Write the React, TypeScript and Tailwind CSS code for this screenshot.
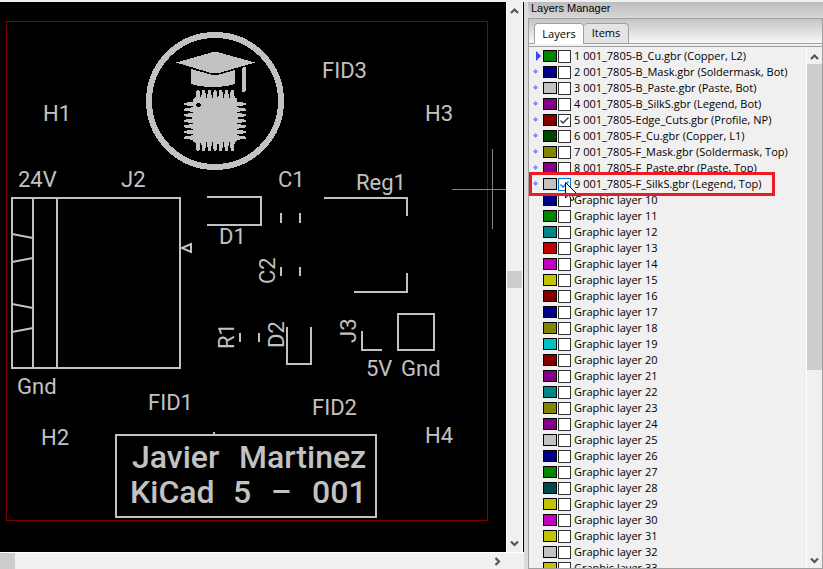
import React, { useState } from "react";

const LAYERS: { name: string; color: string; on?: boolean; file?: boolean }[] = [
  { name: "1 001_7805-B_Cu.gbr (Copper, L2)", color: "#008400", file: true },
  { name: "2 001_7805-B_Mask.gbr (Soldermask, Bot)", color: "#000084", file: true },
  { name: "3 001_7805-B_Paste.gbr (Paste, Bot)", color: "#c2c2c2", file: true },
  { name: "4 001_7805-B_SilkS.gbr (Legend, Bot)", color: "#840084", file: true },
  { name: "5 001_7805-Edge_Cuts.gbr (Profile, NP)", color: "#840000", file: true, on: true },
  { name: "6 001_7805-F_Cu.gbr (Copper, L1)", color: "#004800", file: true },
  { name: "7 001_7805-F_Mask.gbr (Soldermask, Top)", color: "#848400", file: true },
  { name: "8 001_7805-F_Paste.gbr (Paste, Top)", color: "#840084", file: true },
  { name: "9 001_7805-F_SilkS.gbr (Legend, Top)", color: "#c2c2c2", file: true, on: true },
  ...[
    "#000084", "#008400", "#008484", "#c20000", "#c200c2", "#c2c200", "#840000", "#000084",
    "#848400", "#00c2c2", "#840000", "#840084", "#008484", "#848400", "#840084", "#c2c2c2",
    "#000084", "#008400", "#004848", "#c2c200", "#c200c2", "#c2c200", "#c2c2c2", "#c2c200",
  ].map((color, i) => ({ name: `Graphic layer ${i + 10}`, color })),
];

const SILK = "#c2c2c2";

function Chevron({ dir }: { dir: "up" | "down" | "right" }) {
  const d = { up: "M1 7 L4.5 3.5 L8 7", down: "M1 2.5 L4.5 6 L8 2.5", right: "M2.5 1 L6 4.5 L2.5 8" }[dir];
  return (
    <svg width="9" height="9" aria-hidden="true">
      <path d={d} fill="none" stroke="#555" strokeWidth="2.2" />
    </svg>
  );
}

function ChipLogo() {
  const pins = [0, 1, 2, 3, 4, 5, 6];
  return (
    <g fill={SILK} shapeRendering="crispEdges">
      <circle cx="215" cy="101" r="66" fill="none" stroke={SILK} strokeWidth="6" />
      <path d="M176 62.500 L211 52.500 Q215 51.500 219 52.500 L255 62.500 L219 73 Q215 74 211 73Z" />
      <path d="M191 69 L211 74.500 Q215 75.500 219 74.500 L235 70 V84 Q226 87 213 87 Q200 87 191 84Z" />
      <path d="M242 68 L246 66.500 V90 Q246 92 244 92 Q242 92 242 90Z" />
      <rect x="193" y="98" width="44" height="44" rx="2" />
      {pins.map((i) => {
        const x = 198 + i * 5.7;
        const y = 104 + i * 5.6;
        return (
          <g key={i}>
            <path d={`M${x - 2.8} 99 L${x - 1.3} 90 H${x + 1.3} L${x + 2.8} 99Z`} />
            <path d={`M${x - 2.8} 141 L${x - 1.3} 151 H${x + 1.3} L${x + 2.8} 141Z`} />
            <path d={`M195 ${y - 2.8} L184 ${y - 1} V${y + 1} L195 ${y + 2.8}Z`} />
            <path d={`M235 ${y - 2.8} L246 ${y - 1} V${y + 1} L235 ${y + 2.8}Z`} />
          </g>
        );
      })}
      <circle cx="198.500" cy="105" r="2.200" fill="#000" />
    </g>
  );
}

const LABELS: [string, number, number][] = [
  ["FID3", 322, 78], ["H1", 43, 121], ["H3", 425, 121], ["24V", 18, 187], ["J2", 121, 187],
  ["C1", 278, 187], ["Reg1", 356, 190], ["D1", 219, 244], ["5V", 366, 376], ["Gnd", 401, 376],
  ["Gnd", 17, 394], ["FID1", 148, 410], ["FID2", 312, 415], ["H2", 41, 445], ["H4", 425, 443],
];
const UPRIGHT: [string, number, number][] = [
  ["C2", 275, 284], ["R1", 234, 349], ["D2", 284, 348], ["J3", 356, 343],
];
const TITLE: [string, number, number][] = [
  ["Javier", 132, 468], ["Martinez", 239, 468],
  ["KiCad", 130, 503], ["5", 233, 503], ["–", 271, 503], ["001", 312, 503],
];

function Board() {
  return (
    <svg width="507" height="550" viewBox="0 2 507 550" className="block">
      <rect x="6.500" y="21.500" width="481" height="499" fill="none" stroke="#840000" />
      <ChipLogo />
      <g fill="none" stroke={SILK} strokeWidth="2">
        <rect x="12" y="198" width="168" height="170" />
        <path d="M33 198V368M57 198V368M12 234L33 238M12 262L33 258M12 304L33 308M12 332L33 328" />
        <path d="M182 248L191 244V252Z" />
        <path d="M207 197H261V225H207M281 213V223M300 213V223M281 267V276M300 267V276" />
        <path d="M324 198H407V216M407 273V292H354" />
        <path d="M240 333V342M259 333V342M287 327V364H311V327M362 331V350H382" />
        <rect x="398" y="314" width="36" height="36" />
        <rect x="116" y="435" width="260" height="82" />
        <path d="M214 432V434" />
      </g>
      <g fill={SILK} className="font-['Roboto',sans-serif] text-[22px] font-normal">
        {LABELS.map(([t, x, y]) => (
          <text key={`${t}${x}`} x={x} y={y}>{t}</text>
        ))}
        {UPRIGHT.map(([t, x, y]) => (
          <text key={t} transform={`translate(${x} ${y}) rotate(-90)`}>{t}</text>
        ))}
      </g>
      <g fill={SILK} className="font-['Roboto',sans-serif] text-[32px] font-medium">
        {TITLE.map(([t, x, y]) => (
          <text key={t} x={x} y={y}>{t}</text>
        ))}
      </g>
      <path d="M452 189.500H507M492.500 149V229" stroke="#848484" fill="none" />
    </svg>
  );
}

function LayerRow({ index, active }: { index: number; active: boolean }) {
  const layer = LAYERS[index];
  const [on, setOn] = useState(!!layer.on);
  const hot = index === 8;
  return (
    <li className="relative flex h-4 items-center">
      <span className="flex w-[14px] shrink-0 items-center pl-1">
        {layer.file && (
          <svg width="8" height="12" aria-hidden="true">
            {active ? <path d="M3 1L8 6L3 11Z" fill="#4040ff" /> : <path d="M2.500 3L5 5.500L2.500 8L0 5.500Z" fill="#8090ff" />}
          </svg>
        )}
      </span>
      <span className="h-3 w-[14px] shrink-0 border border-black" style={{ backgroundColor: layer.color }} />
      <label className="flex items-center whitespace-nowrap">
        <span className="relative ml-px flex">
          <input
            type="checkbox"
            checked={on}
            onChange={() => setOn(!on)}
            className={`h-[13px] w-[13px] appearance-none border bg-white ${hot ? "border-[#0078d7]" : "border-[#333]"}`}
          />
          {on && (
            <svg width="13" height="13" className="pointer-events-none absolute inset-0" aria-hidden="true">
              <path d="M2.500 6.500L5 9L10.500 3.500" fill="none" stroke={hot ? "#0078d7" : "#333"} strokeWidth="1.300" />
            </svg>
          )}
        </span>
        <span className="ml-[3px]">{layer.name}</span>
      </label>
      {hot && (
        <>
          <svg width="13" height="20" className="pointer-events-none absolute top-[6px] left-[36px] z-10" aria-hidden="true">
            <path d="M.5 .5V16L4 12.500L6.500 18.500L9 17.500L6.500 11.500H11.500Z" fill="#fff" stroke="#000" />
          </svg>
          <span className="pointer-events-none absolute -top-1 left-0 z-20 h-6 w-[246px] border-3 border-[#ed1c24]" />
        </>
      )}
    </li>
  );
}

export default function App() {
  return (
    <div className="flex h-screen overflow-hidden border-t-2 border-[#f0f0f0] bg-[#dcdcdc] text-black">
      <main className="flex min-w-0 flex-1 flex-col">
        <div className="flex min-h-0 flex-1 border-r border-black bg-black">
          <div className="min-w-0 flex-1 overflow-hidden">
            <Board />
          </div>
          <div className="flex w-[17px] flex-col items-center border-x border-white bg-[#f0f0f0]">
            <button aria-label="Scroll up" className="flex h-[17px] items-center"><Chevron dir="up" /></button>
            <div className="flex-[252]" />
            <div className="h-[17px] w-[15px] bg-[#cdcdcd]" />
            <div className="flex-[247]" />
            <button aria-label="Scroll down" className="flex h-[17px] items-center"><Chevron dir="down" /></button>
          </div>
        </div>
        <div className="flex h-[17px] items-center border-t border-white bg-[#f0f0f0] pr-[22px]">
          <div className="h-full w-[15px] bg-[#cdcdcd]" />
          <div className="flex-1" />
          <button aria-label="Scroll right"><Chevron dir="right" /></button>
        </div>
      </main>
      <aside className="ml-1 flex w-[295px] shrink-0 flex-col">
        <h1 className="h-4 bg-linear-to-b from-[#bcbcbc] to-[#d8d8d8] pl-[3px] font-['Liberation_Sans',Arial,sans-serif] text-[11px] leading-3">
          Layers Manager
        </h1>
        <div className="flex min-h-0 flex-1 flex-col border border-[#a0a0a0] bg-[#f0f0f0] font-['Open_Sans',sans-serif] text-[11px]">
          <div role="tablist" className="flex h-[25px] items-end border-b border-[#a0a0a0] bg-linear-to-b from-[#c4c4c4] to-[#f8f8f8] pl-[5px]">
            <button role="tab" aria-selected="true" className="-mb-px h-[21px] w-[50px] rounded-t-sm border border-b-0 border-[#a0a0a0] bg-white">
              Layers
            </button>
            <button role="tab" aria-selected="false" className="h-5 w-[45px] rounded-t-sm border border-l-0 border-b-0 border-[#a0a0a0] bg-[#e4e4e4]">
              Items
            </button>
          </div>
          <div className="mt-[2px] flex min-h-0 flex-1 border-t border-[#a0a0a0]">
            <ul className="min-w-0 flex-1 overflow-hidden pt-px">
              {LAYERS.map((l, i) => (
                <LayerRow key={l.name} index={i} active={i === 0} />
              ))}
            </ul>
            <div className="flex w-4 flex-col items-center border-l border-white pt-px">
              <button aria-label="List up" className="flex h-4 items-center"><Chevron dir="up" /></button>
              <div className="w-[15px] flex-[305] bg-[#cdcdcd]" />
              <div className="flex-[182]" />
              <button aria-label="List down" className="flex h-4 items-center"><Chevron dir="down" /></button>
            </div>
          </div>
        </div>
      </aside>
    </div>
  );
}
